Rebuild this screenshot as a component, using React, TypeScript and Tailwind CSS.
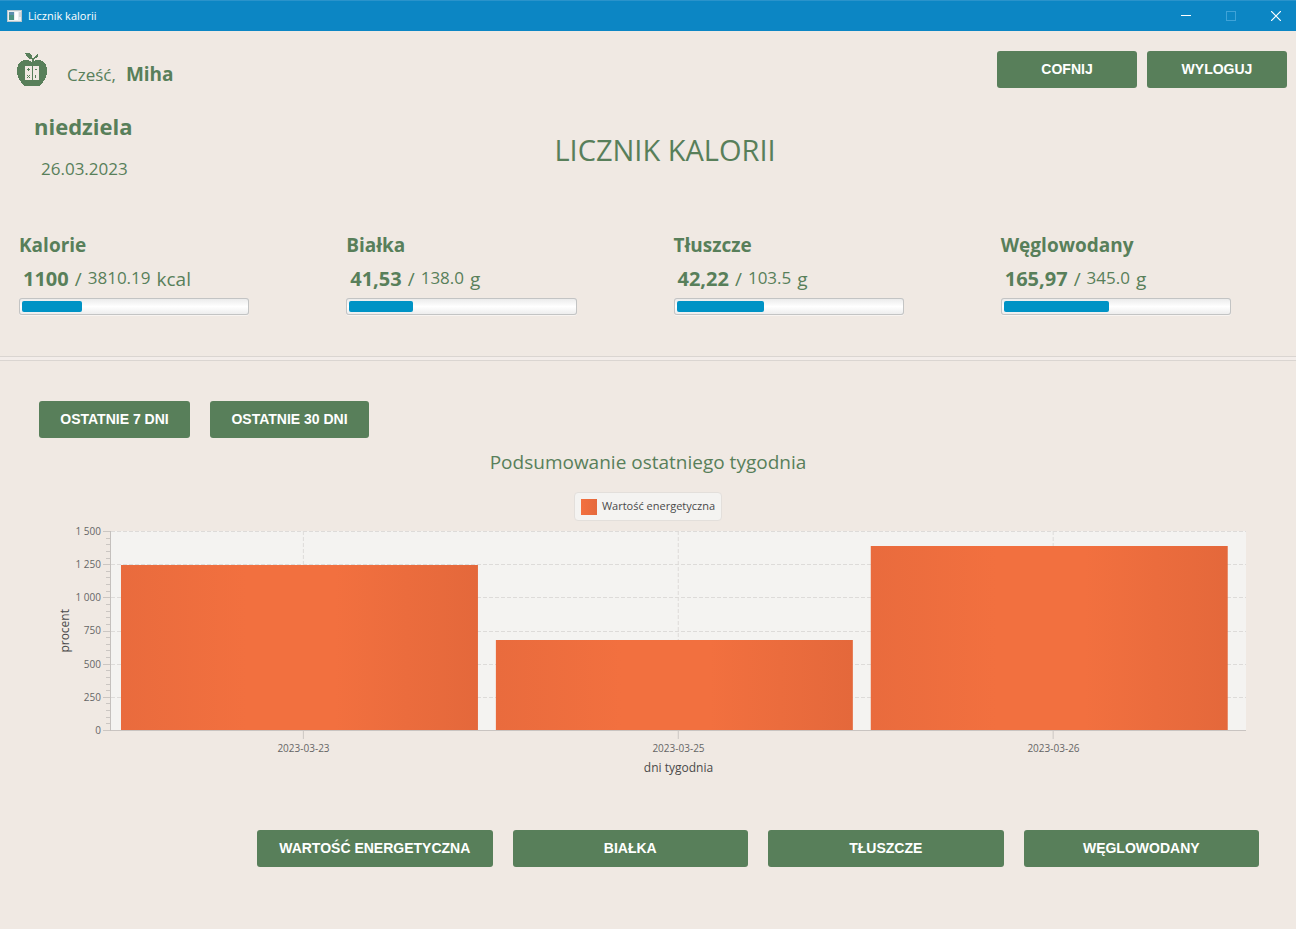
import type { ReactNode } from "react";

type Nutrient = {
  name: string;
  eaten: string;
  goal: string;
  unit: string;
  ratio: number;
};

const nutrients: Nutrient[] = [
  { name: "Kalorie", eaten: "1100", goal: "3810.19", unit: "kcal", ratio: 1100 / 3810.19 },
  { name: "Białka", eaten: "41,53", goal: "138.0", unit: "g", ratio: 41.53 / 138 },
  { name: "Tłuszcze", eaten: "42,22", goal: "103.5", unit: "g", ratio: 42.22 / 103.5 },
  { name: "Węglowodany", eaten: "165,97", goal: "345.0", unit: "g", ratio: 165.97 / 345 },
];

const days = [
  { date: "2023-03-23", value: 1240 },
  { date: "2023-03-25", value: 678 },
  { date: "2023-03-26", value: 1390 },
];

const yLabels = ["1 500", "1 250", "1 000", "750", "500", "250", "0"];
const MAX = 1500;
const PLOT_HEIGHT = 199;
const minorTicks = Array.from({ length: 31 }, (_, i) => i);

function GreenButton({ children, className = "" }: { children: ReactNode; className?: string }) {
  return (
    <button
      type="button"
      className={`h-[37px] rounded-[3px] bg-[#587f5a] px-5 pb-[2px] font-['Liberation_Sans',sans-serif] text-sm font-bold text-white ${className}`}
    >
      {children}
    </button>
  );
}

function TitleBar() {
  return (
    <div className="flex h-[31px] items-center justify-between border-t border-[#2a93cb] bg-[#0c86c4] text-white">
      <div className="flex items-center gap-[6px] pl-[7px]">
        <svg width="15" height="12" viewBox="0 0 15 12" aria-hidden="true">
          <rect width="15" height="12" fill="#e9eef0" />
          <rect x="0.5" y="0.5" width="14" height="11" fill="none" stroke="#b9c7cc" />
          <rect x="2" y="2" width="5" height="8" fill="#4a9384" />
          <rect x="2" y="2" width="5" height="3" fill="#5a8fae" />
          <rect x="8" y="2" width="3" height="8" fill="#ffffff" />
          <rect x="12" y="2" width="2" height="5" fill="#cfd8da" />
        </svg>
        <span className="text-[11px]">Licznik kalorii</span>
      </div>
      <div className="flex gap-[5px]">
        <button type="button" aria-label="Minimalizuj" className="flex h-7 w-10 items-center justify-center">
          <svg width="10" height="10" aria-hidden="true">
            <path d="M0 4.500H10" stroke="#fff" />
          </svg>
        </button>
        <button type="button" aria-label="Maksymalizuj" className="flex h-7 w-10 items-center justify-center">
          <svg width="10" height="10" aria-hidden="true">
            <rect x="0.5" y="0.5" width="9" height="9" fill="none" stroke="#3fa3d8" />
          </svg>
        </button>
        <button type="button" aria-label="Zamknij" className="flex h-7 w-10 items-center justify-center">
          <svg width="10" height="10" aria-hidden="true">
            <path d="M0 0L10 10M10 0L0 10" stroke="#fff" strokeWidth="1.2" />
          </svg>
        </button>
      </div>
    </div>
  );
}

function AppleLogo() {
  return (
    <svg width="30" height="34" viewBox="0 0 30 34" shapeRendering="crispEdges" aria-hidden="true">
      <g fill="#587f5a">
        <path d="M8 0H12L14 1L15 3L16 6H12L10 4Z" />
        <path d="M18 4L19 2L21 1V3L19 5L17 6V4Z" />
        <path d="M14.500 5H17V9H14.500Z" />
        <path d="M15 9C18 7 22 6.300 25 8C28.500 9.800 30 13 30 17.500C30 23 27.500 28 24 31.500C21.500 34 19 33.500 15 32.500C11 33.500 8.500 34 6 31.500C2.500 28 0 23 0 17.500C0 13 1.500 9.800 5 8C8 6.300 12 7 15 9Z" />
      </g>
      <path d="M8 13H15V27H8ZM16 13H22V27H16Z" fill="#f0e9e3" />
      <g fill="#587f5a">
        <path d="M10 16h3v1h-3zM11 15h1v3h-1zM18 16h2v1h-2zM18 22h1v3h-1z" />
        <path d="M10 22h1v1h-1zM12 22h1v1h-1zM11 23h1v1h-1zM10 24h1v1h-1zM12 24h1v1h-1z" />
      </g>
    </svg>
  );
}

function NutrientCard({ name, eaten, goal, unit, ratio }: Nutrient) {
  return (
    <div className="flex flex-col">
      <h2 className="text-[19px] leading-7 font-bold">{name}</h2>
      <p className="flex h-[39px] items-center gap-[6px] pl-1 text-[19px] leading-7">
        <b className="text-xl">{eaten}</b>
        <span>/</span>
        <span className="pb-[2px] text-[17px]">{goal}</span>
        <span>{unit}</span>
      </p>
      <div
        role="progressbar"
        aria-label={name}
        aria-valuenow={Math.round(ratio * 100)}
        className="h-[17px] rounded-[3px] bg-linear-to-b from-[#e9e9e9] via-white to-[#ebebeb] py-[3px] shadow-[inset_0_0_0_1px_#c3c4c4,0_1px_0_#f8f4f1]"
      >
        <div className="h-full px-[3px]" style={{ width: `${ratio * 100}%` }}>
          <div className="h-full rounded-[2px] bg-[#0093c5]" />
        </div>
      </div>
    </div>
  );
}

function Chart() {
  return (
    <figure className="flex flex-col pr-[50px] pl-[58px] text-[#4a4a4a]">
      <figcaption className="mr-[14px] ml-[6px] flex h-[29px] items-center gap-[5px] self-center rounded-[4px] border border-[#e3dfdb] bg-[#f4f3f1] px-[6px] text-[11px]">
        <span className="size-4 bg-linear-to-r from-[#f3703f] to-[#e5693c]" />
        Wartość energetyczna
      </figcaption>
      <div className="mt-[10px] grid grid-cols-[14px_30px_9px_1fr]">
        <div className="flex items-center justify-center pb-2">
          <span className="rotate-180 text-xs leading-[14px] [writing-mode:vertical-rl]">procent</span>
        </div>
        <div className="-mt-[6px] mb-[3px] flex flex-col justify-between pr-px text-right text-[10px] leading-3 text-[#666]">
          {yLabels.map((label) => (
            <span key={label}>{label}</span>
          ))}
        </div>
        <svg className="h-[200px] w-full" aria-hidden="true">
          {minorTicks.map((i) => {
            const y = Math.round((i * PLOT_HEIGHT) / 30) + 0.5;
            return <path key={i} d={`M${i % 5 === 0 ? 1 : 4} ${y}H9`} stroke="#cbc6c2" />;
          })}
          <path d="M8.500 0V200" stroke="#c4c0bd" />
        </svg>
        <svg className="h-[208px] w-full" role="img" aria-label="Wartość energetyczna według dni">
          <defs>
            <linearGradient id="bar">
              <stop offset="0" stopColor="#e96b3d" />
              <stop offset="0.35" stopColor="#f2703f" />
              <stop offset="0.6" stopColor="#f2703f" />
              <stop offset="1" stopColor="#e4683b" />
            </linearGradient>
          </defs>
          <rect width="100%" height="200" fill="#f4f3f1" />
          {[0, 1, 2, 3, 4, 5].map((i) => {
            const y = Math.round((i * PLOT_HEIGHT) / 6) + 0.5;
            return <line key={i} x1="0" x2="100%" y1={y} y2={y} stroke="#dddbd9" strokeDasharray="4 2" />;
          })}
          {days.map((day, i) => {
            const tick = `${16.95 + i * 33.03}%`;
            const height = Math.round((day.value / MAX) * PLOT_HEIGHT);
            return (
              <g key={day.date}>
                <line x1={tick} x2={tick} y1="0" y2="200" stroke="#dddbd9" strokeDasharray="4 2" />
                <line x1={tick} x2={tick} y1="200" y2="208" stroke="#cbc6c2" />
                <rect
                  x={`${0.88 + i * 33.03}%`}
                  y={PLOT_HEIGHT - height}
                  width="31.45%"
                  height={height}
                  fill="url(#bar)"
                />
              </g>
            );
          })}
          <line x1="0" x2="100%" y1="199.500" y2="199.500" stroke="#c9c4c1" />
        </svg>
        <div className="col-start-4 grid grid-cols-3 pt-[3px] pr-[5px] pl-[5px] text-center text-[10px] leading-3 text-[#666]">
          {days.map((day) => (
            <span key={day.date}>{day.date}</span>
          ))}
        </div>
        <span className="col-start-4 pt-[5px] text-center text-xs leading-[18px]">dni tygodnia</span>
      </div>
    </figure>
  );
}

export default function App() {
  return (
    <div className="min-h-screen bg-[#f0e9e3] font-['Open_Sans','Noto_Sans',sans-serif] text-[#587f5a]">
      <TitleBar />
      <header className="flex justify-between pt-5 pr-[9px] pl-[17px]">
        <div className="flex">
          <div className="pt-[2px]">
            <AppleLogo />
          </div>
          <p className="flex items-baseline gap-[10px] pt-[9px] pl-5 leading-7">
            <span className="text-[17px]">Cześć,</span>
            <b className="text-[19px]">Miha</b>
          </p>
        </div>
        <div className="flex gap-[10px]">
          <GreenButton className="w-[140px]">COFNIJ</GreenButton>
          <GreenButton className="w-[140px]">WYLOGUJ</GreenButton>
        </div>
      </header>
      <div className="grid grid-cols-[1fr_auto_1fr] pt-[21px] pl-[34px]">
        <div>
          <p className="text-[22px] leading-8 font-bold">niedziela</p>
          <p className="pt-[15px] pl-[7px] text-[17px] leading-6">26.03.2023</p>
        </div>
        <h1 className="pt-[20px] text-[29px] leading-10">LICZNIK KALORII</h1>
      </div>
      <section className="grid grid-cols-4 gap-[97px] pt-[50px] pr-[65px] pl-[19px]">
        {nutrients.map((nutrient) => (
          <NutrientCard key={nutrient.name} {...nutrient} />
        ))}
      </section>
      <hr className="mt-[41px] h-[5px] border-y border-[#dad5d1] bg-[#f3edea]" />
      <div className="flex gap-5 pt-10 pl-[39px]">
        <GreenButton className="min-w-[151px]">OSTATNIE 7 DNI</GreenButton>
        <GreenButton className="min-w-[159px]">OSTATNIE 30 DNI</GreenButton>
      </div>
      <h2 className="pt-[10px] pb-[16px] text-center text-[19px] leading-7">Podsumowanie ostatniego tygodnia</h2>
      <Chart />
      <div className="grid grid-cols-4 gap-5 pt-[53px] pr-[37px] pb-8 pl-[257px]">
        <GreenButton>WARTOŚĆ ENERGETYCZNA</GreenButton>
        <GreenButton>BIAŁKA</GreenButton>
        <GreenButton>TŁUSZCZE</GreenButton>
        <GreenButton>WĘGLOWODANY</GreenButton>
      </div>
    </div>
  );
}
